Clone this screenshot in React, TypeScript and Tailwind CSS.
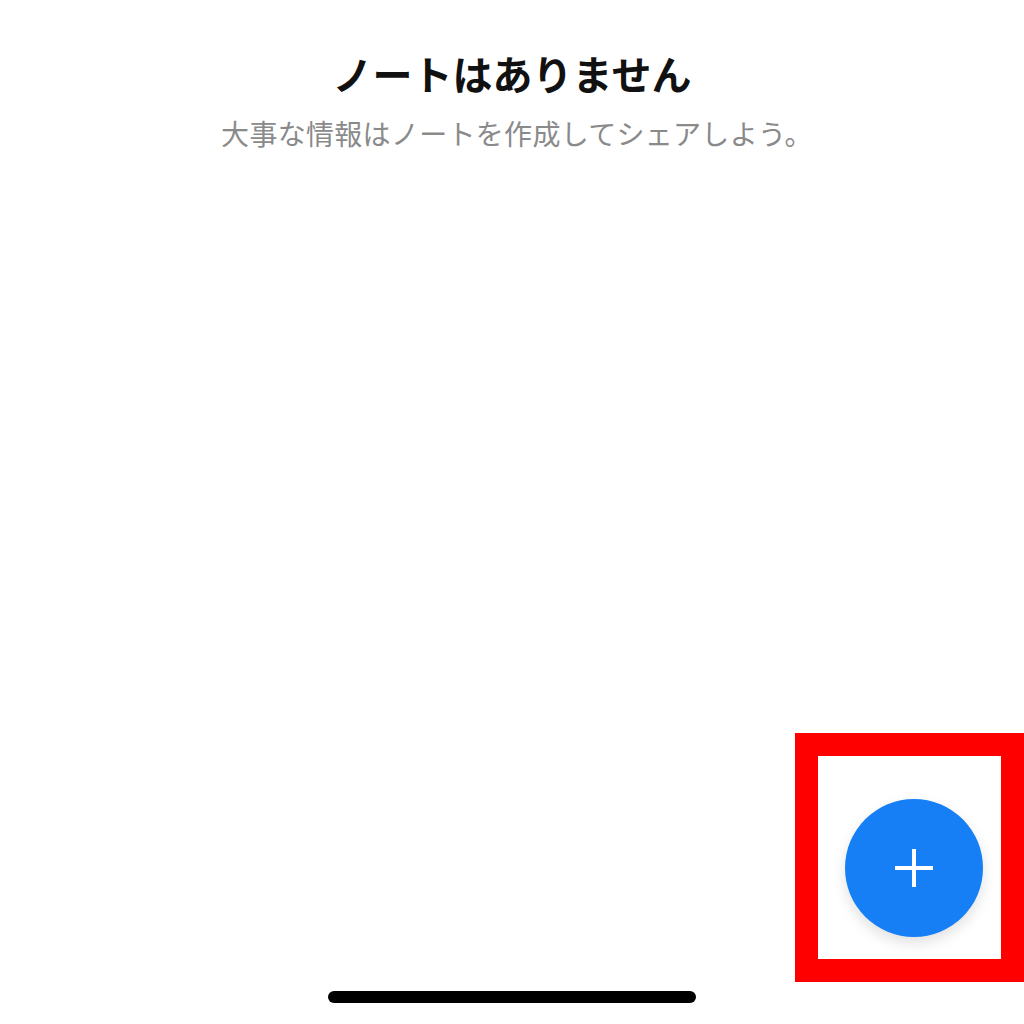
import React from 'react';

const FONT = { fontFamily: '"Noto Sans CJK JP", "Noto Sans", sans-serif' };

function PlusIcon() {
  return (
    <svg width="38" height="38" viewBox="0 0 38 38" fill="none">
      <path d="M19 0v38M0 19h38" stroke="white" strokeWidth="4" />
    </svg>
  );
}

export default function App() {
  return (
    <div className="relative h-[1024px] w-[1024px] overflow-hidden bg-white" style={FONT}>
      <div className="flex flex-col items-center pt-[49px]">
        <h1 className="text-[40px] font-bold leading-[48px] text-[#111111]">ノートはありません</h1>
        <p className="mt-[18px] pl-[10px] text-[28px] leading-[36px] tracking-[0.3px] text-[#8a8a8a]">
          大事な情報はノートを作成してシェアしよう。
        </p>
      </div>

      {/* highlight frame */}
      <div className="absolute left-[795px] top-[733px] h-[249px] w-[229px] border-[23px] border-[#ff0000]" />

      {/* floating action button */}
      <button className="absolute left-[845px] top-[799px] flex h-[138px] w-[138px] items-center justify-center rounded-full bg-[#167ff5] shadow-[0_6px_14px_rgba(0,0,0,0.12)]">
        <PlusIcon />
      </button>

      {/* home indicator */}
      <div className="absolute left-[328px] top-[991px] h-[12px] w-[368px] rounded-full bg-black" />
    </div>
  );
}
